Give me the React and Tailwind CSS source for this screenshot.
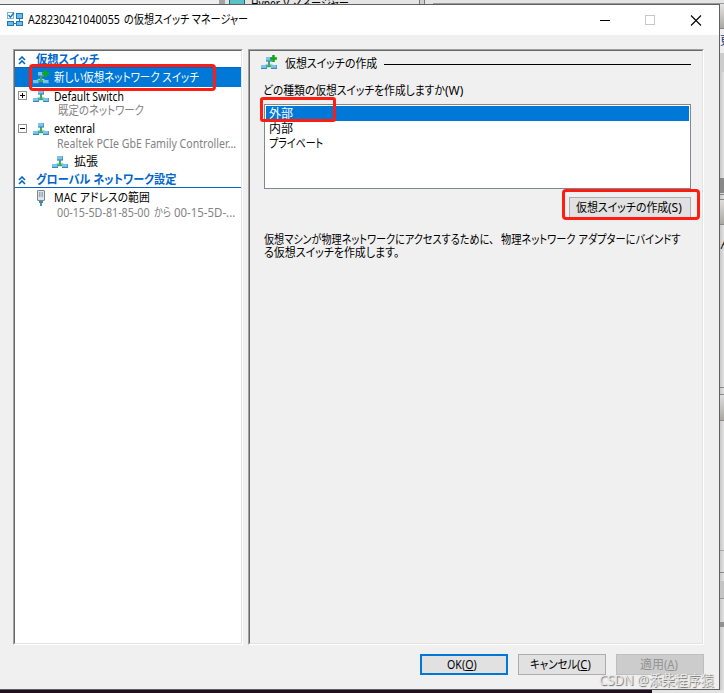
import { useLayoutEffect, useRef } from 'react'
import clsx from 'clsx'

// Single line of text, condensed or widened so that it fills `width` pixels
function Label({ width, className, children }) {
  const ref = useRef(null)

  useLayoutEffect(() => {
    const el = ref.current
    el.style.transform = `scaleX(${width / el.offsetWidth})`
    el.parentElement.style.width = `${width}px`
  }, [width])

  return (
    <span className={clsx('flex shrink-0', className)}>
      <span ref={ref} className="shrink-0 origin-left whitespace-pre">{children}</span>
    </span>
  )
}

function SwitchIcon({ plus = false }) {
  return (
    <svg className="shrink-0" width="16" height="16" viewBox="0 0 16 16">
      <path d="M3 11.5l3-2h4l3 2" fill="none" stroke="#a4cbe0" strokeWidth="1.6" />
      <path d="M8 6v5.5M6 11.2h4" fill="none" stroke="#35b058" strokeWidth="2" />
      <rect x="5" y="2" width="6" height="4.6" fill="#3a86c0" />
      <rect x="5" y="2" width="5.4" height="3.4" fill="#7cc4ee" />
      <rect x="0" y="10" width="6" height="4" fill="#3a86c0" />
      <rect x="0" y="10" width="5.4" height="2.9" fill="#7cc4ee" />
      <rect x="10" y="10" width="6" height="4" fill="#3a86c0" />
      <rect x="10" y="10" width="5.4" height="2.9" fill="#7cc4ee" />
      {plus && <path d="M12.5 0v7M9 3.5h7" stroke="#13a51d" strokeWidth="2.6" />}
    </svg>
  )
}

function AppIcon() {
  return (
    <svg className="shrink-0" width="16" height="16" viewBox="0 0 16 16">
      <rect x="0.5" y="0.5" width="6" height="6" fill="#fff" stroke="#7ab2d6" />
      <path d="M1.5 3l2 2.2L7 0.8" fill="none" stroke="#1877b5" strokeWidth="1.4" />
      <rect x="9.5" y="1.5" width="6" height="5" fill="#62bdf0" stroke="#2678aa" />
      <rect x="0.5" y="9.5" width="6" height="4" fill="#62bdf0" stroke="#2678aa" />
      <rect x="9.5" y="9.5" width="6" height="4" fill="#62bdf0" stroke="#2678aa" />
      <path d="M12.5 6.5v3M7 11.5h2" stroke="#2678aa" />
    </svg>
  )
}

function NicIcon() {
  return (
    <svg className="shrink-0" width="10" height="16" viewBox="0 0 10 16">
      <rect x="1.5" y="0.5" width="7" height="10" rx="0.5" fill="#dce5ea" stroke="#778793" />
      <path d="M3.5 2v5M5 2v5M6.5 2v5" stroke="#7e8e99" strokeWidth="0.7" />
      <rect x="3" y="11" width="4" height="2" fill="#5c7f91" />
      <rect x="4" y="13" width="2" height="3" fill="#2d9cc7" />
    </svg>
  )
}

function Expander({ open = false }) {
  return (
    <svg className="shrink-0" width="9" height="9" viewBox="0 0 9 9" shapeRendering="crispEdges">
      <rect x="0.5" y="0.5" width="8" height="8" fill="#fff" stroke="#919191" />
      <path d={open ? 'M2 4.5h5' : 'M2 4.5h5M4.5 2v5'} stroke="#000" />
    </svg>
  )
}

function SectionHeader({ width, children }) {
  return (
    <div className="flex h-[17px] shrink-0 items-center border-b border-[#0066cc] pt-[2px] pl-[3px] font-bold text-[#0066cc]">
      <svg className="mr-[10px] shrink-0" width="8" height="9" viewBox="0 0 8 9">
        <path d="M1 4l3-3 3 3M1 8l3-3 3 3" fill="none" stroke="#0066cc" strokeWidth="1.6" />
      </svg>
      <Label width={width}>{children}</Label>
    </div>
  )
}

function Button({ width, hotkeyWidth, hotkey, className, children }) {
  return (
    <button className={clsx('flex h-[21px] w-[88px] items-center justify-center', className)}>
      <Label width={width}>{children}</Label>
      <Label width={hotkeyWidth}>(<u className="underline-offset-1">{hotkey}</u>)</Label>
    </button>
  )
}

const sunken = 'border border-t-[#a0a0a0] border-l-[#a0a0a0] border-r-white border-b-white'
const sunkenInner = 'border border-t-[#696969] border-l-[#696969] border-r-[#e3e3e3] border-b-[#e3e3e3]'

export default function App() {
  return (
    <div
      className="relative flex h-[693px] w-[724px] flex-col overflow-hidden bg-[#e2e2e2] font-['Noto_Sans','Noto_Sans_CJK_JP',sans-serif] text-[12px] leading-[16px] text-black [font-feature-settings:'palt']"
    >
      {/* Window behind: top edge */}
      <div className="flex h-[4px] shrink-0 overflow-hidden bg-[#e4e4e4]">
        <div className="w-[219px] bg-[#eeeeee]" />
        <div className="w-[6px] bg-[#a3a3a3]" />
        <div className="ml-[4px] w-[16px] border-x border-[#246a70] bg-[#5cc0c8]" />
        <div className="-mt-[3px] ml-[6px] leading-[14px]">
          <Label width={98}>Hyper-V マネージャー</Label>
        </div>
        <div className="ml-[70px] w-[6px] border-x border-[#777777] bg-[#cfcfcf]" />
        <div className="mt-[3px] ml-[8px] flex-1 bg-[#999999]" />
      </div>

      <div className="flex h-[686px] shrink-0">
        <div className="flex w-[720px] flex-col border-t border-r border-b border-[#606060] bg-[#f0f0f0]">
          {/* Title bar */}
          <div className="flex h-[30px] shrink-0 items-center bg-white pl-[7px]">
            <AppIcon />
            <Label width={92} className="ml-[5px]">A28230421040055</Label>
            <Label width={124} className="ml-[4px]">の仮想スイッチ マネージャー</Label>
            <svg className="ml-[352px] shrink-0" width="102" height="11" viewBox="0 0 102 11">
              <path d="M0 5.5h10" stroke="#000" shapeRendering="crispEdges" />
              <rect x="45.5" y="0.5" width="9" height="9" fill="none" stroke="#c8c8c8" />
              <path d="M91 0.5l10 10M101 0.5l-10 10" stroke="#000" strokeWidth="1.1" />
            </svg>
          </div>

          <div className="mt-[14px] ml-[13px] flex h-[596px] shrink-0 gap-[5px]">
            {/* Tree */}
            <div className={clsx('w-[230px]', sunken)}>
              <div className={clsx('flex h-full flex-col overflow-hidden bg-white', sunkenInner)}>
                <SectionHeader width={63}>仮想スイッチ</SectionHeader>
                <div className="flex h-[19px] items-center bg-[#0078d7] pl-[18px] text-white">
                  <SwitchIcon plus />
                  <Label width={145} className="ml-[5px]">新しい仮想ネットワーク スイッチ</Label>
                </div>
                <div className="flex h-[17px] items-center pl-[3px]">
                  <Expander />
                  <div className="ml-[6px] flex"><SwitchIcon /></div>
                  <Label width={70} className="mt-[2px] ml-[5px]">Default Switch</Label>
                </div>
                <div className="h-[16px] pl-[43px] leading-[14px] text-[#838383]">
                  <Label width={86}>既定のネットワーク</Label>
                </div>
                <div className="flex h-[17px] items-center pl-[3px]">
                  <Expander open />
                  <div className="ml-[6px] flex"><SwitchIcon /></div>
                  <Label width={41} className="ml-[5px]">extenral</Label>
                </div>
                <div className="h-[16px] pl-[42px] leading-[14px] text-[#838383]">
                  <Label width={179}>Realtek PCIe GbE Family Controller...</Label>
                </div>
                <div className="flex h-[18px] items-center pl-[37px]">
                  <SwitchIcon />
                  <Label width={24} className="ml-[6px]">拡張</Label>
                </div>
                <SectionHeader width={140}>グローバル ネットワーク設定</SectionHeader>
                <div className="flex h-[18px] items-center pt-px pl-[21px]">
                  <NicIcon />
                  <Label width={23} className="ml-[8px]">MAC</Label>
                  <Label width={70} className="ml-[3px]">アドレスの範囲</Label>
                </div>
                <div className="flex h-[16px] pl-[42px] leading-[14px] text-[#838383]">
                  <Label width={93}>00-15-5D-81-85-00</Label>
                  <Label width={17} className="ml-[4px]">から</Label>
                  <Label width={61} className="ml-[3px]">00-15-5D-...</Label>
                </div>
              </div>
            </div>

            {/* Details */}
            <div className={clsx('w-[456px]', sunken)}>
              <div className={clsx('flex h-full flex-col pr-[11px] pl-[11px]', sunkenInner)}>
                <div className="mt-[3px] flex h-[19px] items-center">
                  <div className="-mt-[2px] flex"><SwitchIcon plus /></div>
                  <Label width={92} className="mt-px ml-[8px]">仮想スイッチの作成</Label>
                  <div className="mt-px ml-[7px] h-px flex-1 bg-black" />
                </div>
                <div className="mt-[10px] flex h-[16px] pl-[2px]">
                  <Label width={182}>どの種類の仮想スイッチを作成しますか</Label>
                  <Label width={18}>(W)</Label>
                </div>
                <div className="mt-[5px] ml-[3px] flex h-[85px] shrink-0 flex-col border border-[#828790] bg-white p-px leading-[15px]">
                  <div className="h-[15px] bg-[#0078d7] pl-[3px] text-white"><Label width={24}>外部</Label></div>
                  <div className="h-[15px] pl-[3px]"><Label width={24}>内部</Label></div>
                  <div className="h-[15px] pl-[3px]"><Label width={54}>プライベート</Label></div>
                </div>
                <div className="mt-[8px] flex justify-end">
                  <button className="flex h-[21px] w-[122px] items-center border border-[#adadad] bg-[#e1e1e1] pl-[6px]">
                    <Label width={92}>仮想スイッチの作成</Label>
                    <Label width={14}>(S)</Label>
                  </button>
                </div>
                <div className="mt-[15px] flex flex-col items-start pl-[3px] leading-[13px]">
                  <div className="flex">
                    <Label width={230}>仮想マシンが物理ネットワークにアクセスするために、</Label>
                    <Label width={180} className="ml-[7px]">物理ネットワーク アダプターにバインドす</Label>
                  </div>
                  <Label width={135}>る仮想スイッチを作成します。</Label>
                </div>
              </div>
            </div>
          </div>

          <div className="mt-[9px] mr-[15px] flex justify-end gap-[10px]">
            <Button width={15} hotkeyWidth={15} hotkey="O" className="border-2 border-[#0078d7] bg-[#e1e1e1] pr-[4px]">OK</Button>
            <Button width={47} hotkeyWidth={14} hotkey="C" className="border border-[#adadad] bg-[#e1e1e1] pr-[3px]">キャンセル</Button>
            <Button width={24} hotkeyWidth={14} hotkey="A" className="border border-[#bfbfbf] bg-[#cccccc] pr-[2px] text-[#939393]">適用</Button>
          </div>
        </div>

        {/* Window behind: right edge */}
        <div className="flex w-[4px] flex-col overflow-hidden bg-gradient-to-r from-[#c8c8c8] to-[#e2e2e2] *:shrink-0">
          <div className="h-[25px] border-b border-[#888888] bg-gradient-to-b from-[#e4e4e4] to-[#aaa8a2]" />
          <div className="h-[24px] overflow-hidden bg-[#eeeeee] pt-[4px] text-[#123a78]">更</div>
          <div className="h-[19px] bg-[#cccccc]" />
          <div className="h-[106px]" />
          <div className="h-[15px] bg-[#888888]" />
          <div className="h-[2px] border-b border-[#888888]" />
          <div className="mt-[4px] h-[26px] border-t border-b border-[#888888] bg-gradient-to-b from-[#dddddd] to-[#aaa8a2]" />
          <div className="h-[162px] overflow-hidden pt-[12px]">ん</div>
          <div className="h-[7px] border-t border-[#888888]" />
          <div className="h-[27px] border-t border-b border-[#888888] bg-gradient-to-b from-[#dddddd] to-[#aaa8a2]" />
          <div className="h-[130px] border-b border-[#aaaaaa]" />
          <div className="h-[22px] border-b border-[#888888]" />
          <div className="mt-[8px] h-[18px] border-b border-[#999999] bg-[#c4c4c4]" />
          <div className="mt-[23px] h-[5px] bg-[#909090]" />
        </div>
      </div>

      {/* Window behind: bottom edge */}
      <div className="h-[3px] w-[652px] bg-[#20101f]" />

      {/* Highlight frames */}
      <div className="absolute top-[64px] left-[29px] h-[27px] w-[187px] rounded-[4px] border-[3px] border-[#ff1d12]" />
      <div className="absolute top-[97px] left-[260px] h-[25px] w-[76px] rounded-[3px] border-[3px] border-[#ff1d12]" />
      <div className="absolute top-[189px] left-[562px] h-[31px] w-[138px] rounded-[4px] border-[3px] border-[#ff1d12]" />

      {/* Watermark */}
      <div className="absolute top-[671px] left-[599px] text-[14px] leading-[18px] text-[#e9e9e9] [text-shadow:1px_1px_1px_#707070]">
        <Label width={115}>CSDN @添柴程序猿</Label>
      </div>
    </div>
  )
}
